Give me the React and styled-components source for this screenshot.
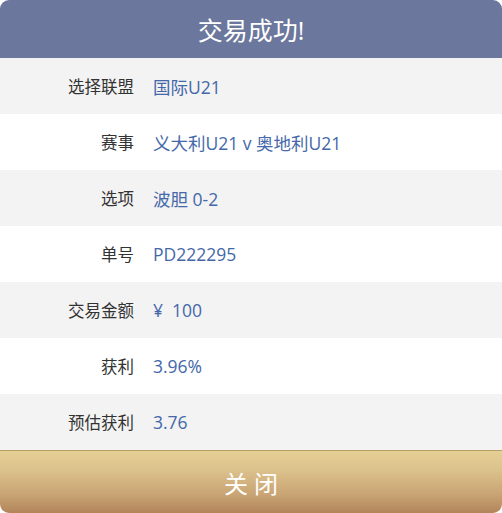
import styled, { createGlobalStyle } from "styled-components";

const Global = createGlobalStyle`
html, body {
  margin: 0;
  padding: 0;
  background: #ffffff;
}
`

const Dialog = styled.div`
width: 502px;
height: 513px;
border-radius: 9px;
overflow: hidden;
display: flex;
flex-direction: column;
font-family: "Open Sans", "Noto Sans CJK SC", sans-serif;
`
const Header = styled.div`
height: 58px;
flex-shrink: 0;
background: #6b779c;
color: #ffffff;
font-size: 25px;
display: flex;
align-items: center;
justify-content: center;
`
const Row = styled.div`
height: 56px;
flex-shrink: 0;
display: flex;
align-items: center;
background: ${(p) => (p.$gray ? "#f3f3f3" : "#ffffff")};
font-size: 16.5px;
`
const Label = styled.div`
width: 134px;
text-align: right;
color: #333333;
`
const Value = styled.div`
margin-left: 19px;
color: #4468a9;
font-size: 17.5px;
white-space: pre;
`
const CloseButton = styled.button`
flex: 1;
border: none;
border-top: 1px solid #b89d6a;
background: linear-gradient(to bottom, #e5cf94 0%, #dcc28c 30%, #c9a474 70%, #b2855a 100%);
color: #ffffff;
font-family: "Open Sans", "Noto Sans CJK SC", sans-serif;
font-size: 24px;
letter-spacing: 6px;
padding: 0 0 0 6px;
cursor: pointer;
`

const rows = [
    ["选择联盟", "国际U21"],
    ["赛事", "义大利U21 v 奥地利U21"],
    ["选项", "波胆 0-2"],
    ["单号", "PD222295"],
    ["交易金额", "¥  100"],
    ["获利", "3.96%"],
    ["预估获利", "3.76"],
];

export default function App() {
    return (
        <>
            <Global />
            <Dialog>
                <Header>交易成功!</Header>
                {rows.map(([label, value], i) => (
                    <Row key={label} $gray={i % 2 === 0}>
                        <Label>{label}</Label>
                        <Value>{value}</Value>
                    </Row>
                ))}
                <CloseButton>关闭</CloseButton>
            </Dialog>
        </>
    );
}
